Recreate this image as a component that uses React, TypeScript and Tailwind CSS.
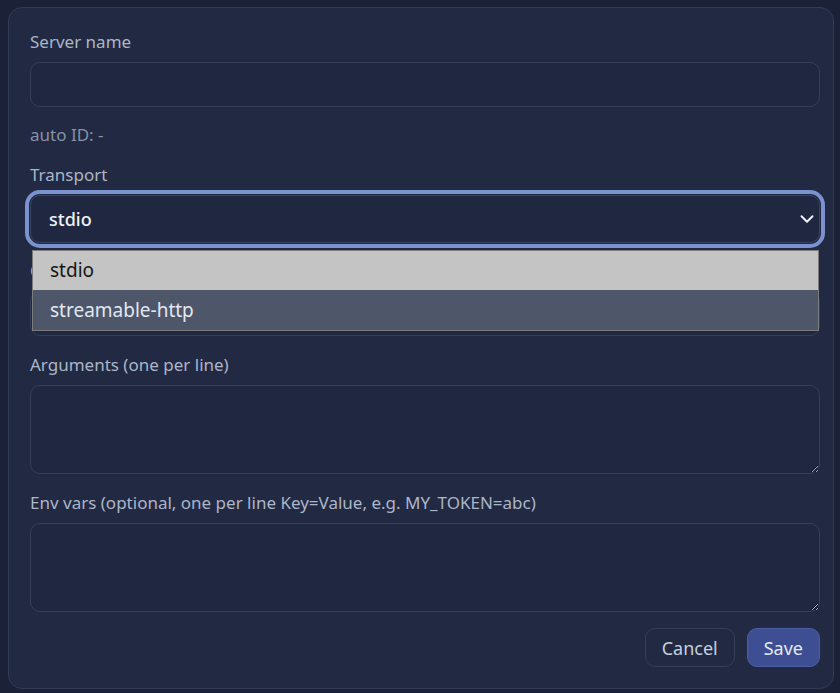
import { ChevronDown } from "lucide-react";

const font = { fontFamily: '"Noto Sans", "Open Sans", sans-serif' };

const Label = ({ children, className = "" }: { children: React.ReactNode; className?: string }) => (
  <div className={`text-[17px] leading-6 text-[#adb5c9] ${className}`}>{children}</div>
);

const App = () => {
  return (
    <div className="min-h-screen bg-[#1b2237] pb-[4px] pl-2 pr-[6px] pt-[7px]" style={font}>
      <div className="rounded-[14px] border border-[#323c57] bg-[#212a42] pb-[21px] pl-[21px] pr-[13px] pt-[22px]">
        <Label>Server name</Label>
        <input className="mt-2 block h-[45px] w-full rounded-[10px] border border-[#343f5a] bg-[#1f2840] px-4 text-lg text-[#e8ebf4] outline-none" />

        <div className="mt-4 text-[17px] leading-6 text-[#8891a7]">auto ID: -</div>

        <Label className="mt-4">Transport</Label>
        <div className="relative mt-2">
          <div className="flex h-[48px] items-center rounded-[10px] border border-[#3a4561] bg-[#1f2840] pl-[18px] text-lg font-medium text-[#f0f2f8] shadow-[0_0_0_1px_#1e2640,0_0_0_5px_#7b92cf]">
            stdio
          </div>
          <ChevronDown
            size={22}
            strokeWidth={2.2}
            className="pointer-events-none absolute right-[2px] top-[13px] text-[#eef1f8]"
          />
          <ul className="absolute left-[2px] right-[1px] top-[55px] z-10 border border-[#7c7c7c] text-[19px]">
            <li className="flex h-[39px] items-center bg-[#c4c4c4] pl-[17px] text-[#161616]">stdio</li>
            <li className="flex h-[40px] items-center bg-[#4e566a] pl-[17px] text-[#e3e7f1]">streamable-http</li>
          </ul>
        </div>

        <Label className="mt-4">Command</Label>
        <input className="mt-2 block h-[45px] w-full rounded-[10px] border border-[#343f5a] bg-[#1f2840] px-4 text-lg text-[#e8ebf4] outline-none" />

        <Label className="mt-[17px]">Arguments (one per line)</Label>
        <textarea className="mt-2 block h-[89px] w-full resize-y rounded-[10px] border border-[#343f5a] bg-[#1f2840] px-4 py-2 text-lg text-[#e8ebf4] outline-none [color-scheme:dark]" />

        <Label className="mt-[17px]">Env vars (optional, one per line Key=Value, e.g. MY_TOKEN=abc)</Label>
        <textarea className="mt-2 block h-[89px] w-full resize-y rounded-[10px] border border-[#343f5a] bg-[#1f2840] px-4 py-2 text-lg text-[#e8ebf4] outline-none [color-scheme:dark]" />

        <div className="mt-4 flex justify-end gap-3">
          <button className="h-[39px] rounded-[10px] border border-[#343f5a] bg-[#212a42] px-4 text-lg text-[#c9cfdf]">
            Cancel
          </button>
          <button className="h-[39px] rounded-[10px] border border-[#4b5ea3] bg-[#3d4f92] px-4 text-lg text-[#e6e9f3]">
            Save
          </button>
        </div>
      </div>
    </div>
  );
};

export default App;
